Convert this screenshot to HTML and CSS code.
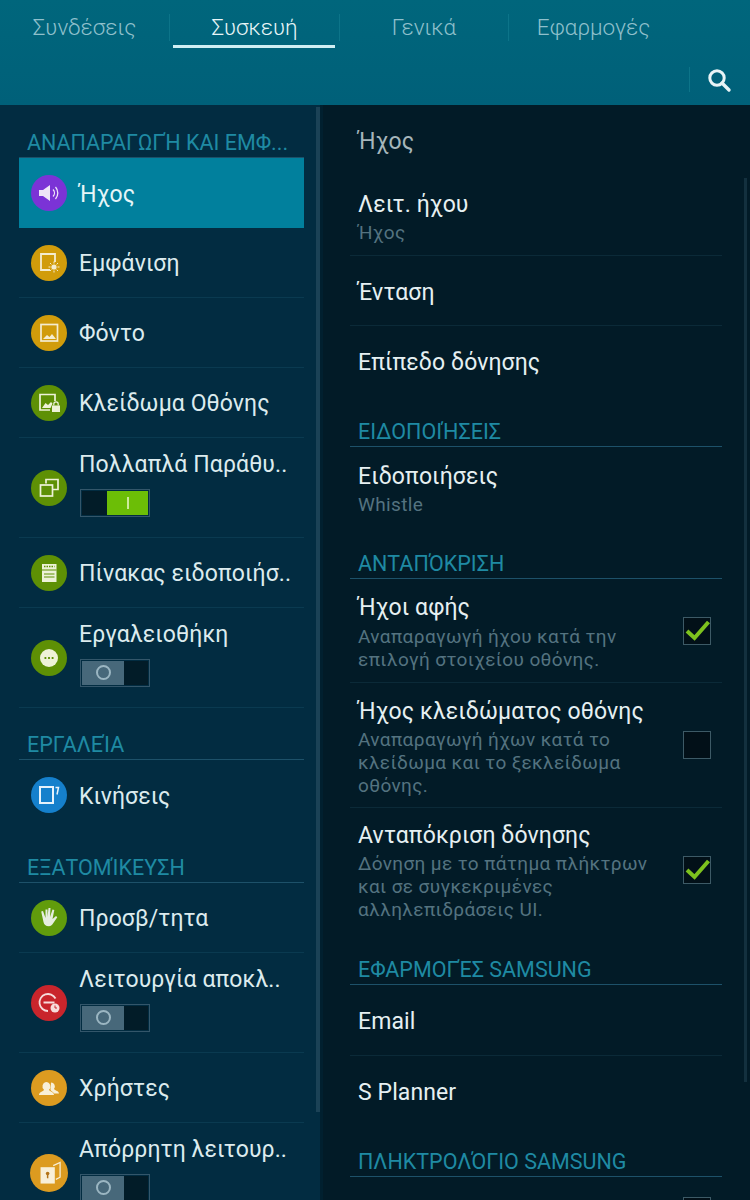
FILE: index.html
```html
<!DOCTYPE html>
<html lang="el">

<head>
    <meta charset="UTF-8">
    <meta name="viewport" content="width=device-width, initial-scale=1.0">
    <title>Ρυθμίσεις</title>
    <link rel="stylesheet" href="styles.css">
</head>

<body>
    <header class="topbar">
        <nav class="tabs">
            <div class="tab">Συνδέσεις</div>
            <div class="tab active">Συσκευή</div>
            <div class="tab">Γενικά</div>
            <div class="tab">Εφαρμογές</div>
        </nav>
        <div class="search-row">
            <div class="search-btn">
                <svg width="26" height="26" viewBox="0 0 26 26">
                    <circle cx="11" cy="11" r="7.2" fill="none" stroke="#e8f4f6" stroke-width="3" />
                    <path d="M16 16l7 7" stroke="#e8f4f6" stroke-width="3.4" stroke-linecap="round" />
                </svg>
            </div>
        </div>
    </header>

    <div class="main-content">
        <aside class="left-section">
            <div class="group-title first">ΑΝΑΠΑΡΑΓΩΓΉ ΚΑΙ ΕΜΦ...</div>
            <div class="menu-item selected">
                <span class="icon purple">
                    <svg viewBox="0 0 36 36">
                        <path d="M8 15h4l7-5v16l-7-5H8z" fill="#efe6f7" />
                        <path d="M22 14.5a5 5 0 0 1 0 7M24.500 12a9 9 0 0 1 0 12" fill="none" stroke="#efe6f7" stroke-width="1.300" />
                    </svg>
                </span>
                <span class="label">Ήχος</span>
            </div>
            <div class="menu-item">
                <span class="icon amber">
                    <svg viewBox="0 0 36 36">
                        <path d="M19 25H10V9h14v8" fill="none" stroke="#f4ecd0" stroke-width="1.800" />
                        <circle cx="23" cy="22" r="2.600" fill="#f4ecd0" />
                        <path d="M23 16.500v2M23 25.500v2M17.500 22h2M26.500 22h2M19 18l1.400 1.400M25.600 24.600l1.400 1.400M27 18l-1.400 1.400M20.400 24.600L19 26" stroke="#f4ecd0" stroke-width="1" />
                    </svg>
                </span>
                <span class="label">Εμφάνιση</span>
            </div>
            <div class="menu-item">
                <span class="icon amber">
                    <svg viewBox="0 0 36 36">
                        <rect x="10" y="9.500" width="16.500" height="16.500" fill="none" stroke="#f4ecd0" stroke-width="1.700" />
                        <path d="M12 24l4-4 2.500 2 2.500-3 4 5z" fill="#f4ecd0" />
                    </svg>
                </span>
                <span class="label">Φόντο</span>
            </div>
            <div class="menu-item">
                <span class="icon green">
                    <svg viewBox="0 0 36 36">
                        <path d="M19 25H9V9.500h15V16" fill="none" stroke="#eef2d8" stroke-width="1.700" />
                        <path d="M11 23l3.500-5 2.500 2 3-3 1.500 1.500-2 4.500z" fill="#eef2d8" />
                        <rect x="21" y="20.500" width="8" height="6.500" fill="#eef2d8" />
                        <path d="M22.800 20.500v-1.500a2.200 2.200 0 0 1 4.400 0v1.500" fill="none" stroke="#eef2d8" stroke-width="1.200" />
                    </svg>
                </span>
                <span class="label">Κλείδωμα Οθόνης</span>
            </div>
            <div class="menu-item tall">
                <span class="icon green">
                    <svg viewBox="0 0 36 36">
                        <path d="M15 13.500V9.500h12v10h-6" fill="none" stroke="#eef2d8" stroke-width="1.700" />
                        <rect x="9.500" y="15" width="12" height="11" fill="none" stroke="#eef2d8" stroke-width="1.700" />
                    </svg>
                </span>
                <div class="label-stack">
                    <span class="label">Πολλαπλά Παράθυ..</span>
                    <div class="toggle on"><span class="toggle-off"></span><span class="toggle-on"><i></i></span></div>
                </div>
            </div>
            <div class="menu-item">
                <span class="icon green">
                    <svg viewBox="0 0 36 36">
                        <rect x="11" y="9" width="14.500" height="18" fill="#eef2d8" />
                        <path d="M13 11.500h10.500" stroke="#5e9005" stroke-width="1.400" stroke-dasharray="1.500 1" />
                        <path d="M11 15h14.500M13 19h10.500M13 22h10.500" stroke="#5e9005" stroke-width="1.200" />
                    </svg>
                </span>
                <span class="label">Πίνακας ειδοποιήσ..</span>
            </div>
            <div class="menu-item tall">
                <span class="icon green">
                    <svg viewBox="0 0 36 36">
                        <circle cx="18" cy="18" r="9" fill="#eef2d8" />
                        <path d="M13.500 18h9" stroke="#5e9005" stroke-width="1.800" stroke-dasharray="1.800 1.800" />
                    </svg>
                </span>
                <div class="label-stack">
                    <span class="label">Εργαλειοθήκη</span>
                    <div class="toggle off"><span class="toggle-on"><b></b></span><span class="toggle-off"></span></div>
                </div>
            </div>

            <div class="group-title">ΕΡΓΑΛΕΊΑ</div>
            <div class="menu-item plain">
                <span class="icon blue">
                    <svg viewBox="0 0 36 36">
                        <rect x="9" y="10" width="13" height="16" fill="none" stroke="#e6f2fb" stroke-width="2" />
                        <path d="M24.500 10.500h3l-1.500 7" fill="none" stroke="#e6f2fb" stroke-width="1.500" />
                    </svg>
                </span>
                <span class="label">Κινήσεις</span>
            </div>

            <div class="group-title gap53">ΕΞΑΤΟΜΊΚΕΥΣΗ</div>
            <div class="menu-item">
                <span class="icon lime">
                    <svg viewBox="0 0 36 36">
                        <path d="M12 11l2.500 7V9.500h2V17l1-9h2l-.5 9 2.500-7.500 1.800.6L21.500 19l3.500-3 1.300 1.200-5 7.300a4 4 0 0 1-3.300 1.700c-3.500 0-5-1.700-5.500-4.200L10.200 11.500z" fill="#e6eee0" />
                    </svg>
                </span>
                <span class="label">Προσβ/τητα</span>
            </div>
            <div class="menu-item tall">
                <span class="icon red">
                    <svg viewBox="0 0 36 36">
                        <path d="M24.500 13.500A8.500 8.500 0 1 0 17 26" fill="none" stroke="#f7dcdc" stroke-width="1.800" />
                        <path d="M12.500 17.500h11" stroke="#f7dcdc" stroke-width="2" />
                        <circle cx="24" cy="23" r="4.500" fill="#f7dcdc" />
                        <path d="M24 20.500V23h2" fill="none" stroke="#c9252c" stroke-width="1" />
                    </svg>
                </span>
                <div class="label-stack">
                    <span class="label">Λειτουργία αποκλ..</span>
                    <div class="toggle off"><span class="toggle-on"><b></b></span><span class="toggle-off"></span></div>
                </div>
            </div>
            <div class="menu-item">
                <span class="icon orange">
                    <svg viewBox="0 0 36 36">
                        <path d="M20 12.500a4 4 0 0 1 3 6.500c1 1.500 5 2 5 4.500h-5c-1-2-3-2.500-3.500-3.500" fill="#f8efd8" />
                        <path d="M15 12a4.500 4.500 0 0 1 3 7.800c0 1.700 5 2 5 5.200H8c0-3.200 5-3.500 5-5.200A4.500 4.500 0 0 1 15 12z" fill="#f8efd8" />
                    </svg>
                </span>
                <span class="label">Χρήστες</span>
            </div>
            <div class="menu-item tall">
                <span class="icon orange big">
                    <svg viewBox="0 0 36 36">
                        <path d="M22 11l6.500-3v14l-4 2" fill="none" stroke="#f8efd8" stroke-width="1.200" />
                        <rect x="10" y="12.500" width="13.500" height="15.500" fill="#f8efd8" />
                        <circle cx="16.700" cy="18.500" r="1.700" fill="#b3741a" />
                        <path d="M16 19h1.400v4H16z" fill="#b3741a" />
                    </svg>
                </span>
                <div class="label-stack">
                    <span class="label">Απόρρητη λειτουρ..</span>
                    <div class="toggle off"><span class="toggle-on"><b></b></span><span class="toggle-off"></span></div>
                </div>
            </div>
            <div class="scrollbar"></div>
        </aside>

        <section class="right-section">
            <div class="row first-row"><span class="row-title dim">Ήχος</span></div>
            <div class="row two-line lined">
                <span class="row-title">Λειτ. ήχου</span>
                <span class="row-sub">Ήχος</span>
            </div>
            <div class="row lined"><span class="row-title">Ένταση</span></div>
            <div class="row"><span class="row-title">Επίπεδο δόνησης</span></div>

            <div class="group-title right">ΕΙΔΟΠΟΙΉΣΕΙΣ</div>
            <div class="row two-line notify">
                <span class="row-title">Ειδοποιήσεις</span>
                <span class="row-sub">Whistle</span>
            </div>

            <div class="group-title right short">ΑΝΤΑΠΌΚΡΙΣΗ</div>
            <div class="check-row lined h104">
                <div class="check-text">
                    <span class="row-title">Ήχοι αφής</span>
                    <span class="row-sub">Αναπαραγωγή ήχου κατά την επιλογή στοιχείου οθόνης.</span>
                </div>
                <span class="checkbox checked">
                    <svg viewBox="0 0 26 26"><path d="M3 13l7.500 7L24.500 4" fill="none" stroke="#7dc21e" stroke-width="4" /></svg>
                </span>
            </div>
            <div class="check-row lined h125">
                <div class="check-text">
                    <span class="row-title">Ήχος κλειδώματος οθόνης</span>
                    <span class="row-sub">Αναπαραγωγή ήχων κατά το κλείδωμα και το ξεκλείδωμα οθόνης.</span>
                </div>
                <span class="checkbox"></span>
            </div>
            <div class="check-row h123">
                <div class="check-text">
                    <span class="row-title">Ανταπόκριση δόνησης</span>
                    <span class="row-sub">Δόνηση με το πάτημα πλήκτρων και σε συγκεκριμένες αλληλεπιδράσεις UI.</span>
                </div>
                <span class="checkbox checked">
                    <svg viewBox="0 0 26 26"><path d="M3 13l7.500 7L24.500 4" fill="none" stroke="#7dc21e" stroke-width="4" /></svg>
                </span>
            </div>

            <div class="group-title right tall-title">ΕΦΑΡΜΟΓΈΣ SAMSUNG</div>
            <div class="row lined email-row"><span class="row-title">Email</span></div>
            <div class="row"><span class="row-title">S Planner</span></div>

            <div class="group-title right">ΠΛΗΚΤΡΟΛΌΓΙΟ SAMSUNG</div>
            <div class="check-row last-row"><span class="checkbox"></span></div>
            <div class="scrollbar right-bar"></div>
        </section>
    </div>
</body>

</html>
```

FILE: styles.css
```css
html,
body {
    margin: 0;
    padding: 0;
    height: 1200px;
    overflow: hidden;
}

body {
    width: 750px;
    font-family: Roboto, "Noto Sans", sans-serif;
    background-color: #021b27;
    color: #e6f0f2;
}

/* top bar */
.topbar {
    height: 105px;
    background: linear-gradient(#00667c, #006079);
}

.tabs {
    display: grid;
    grid-template-columns: 170px 170px 169px 169px;
    padding-top: 14px;
}

.tab {
    height: 27px;
    text-align: center;
    font-size: 22.500px;
    line-height: 27px;
    font-weight: 300;
    color: #8fc0cc;
    border-right: 1px solid #0c7489;
    position: relative;
}

.tab:last-child {
    border-right: none;
}

.tab.active {
    color: #e8f5f7;
}

.tab.active::after {
    content: "";
    position: absolute;
    left: 3px;
    right: 4px;
    bottom: -7px;
    height: 3px;
    background-color: #cfeef3;
}

.search-row {
    display: flex;
    justify-content: flex-end;
    padding-top: 26px;
}

.search-btn {
    width: 61px;
    height: 25px;
    border-left: 1px solid #0c7489;
    padding-left: 16px;
    box-sizing: border-box;
}

/* columns */
.main-content {
    display: flex;
    height: 1095px;
}

.left-section {
    width: 323px;
    height: 1095px;
    box-sizing: border-box;
    padding: 0 16px 0 19px;
    background-color: #022c41;
    border-right: 3px solid #01202f;
    flex-shrink: 0;
    position: relative;
    overflow: hidden;
}

.right-section {
    flex: 1;
    padding: 1px 28px 0 27px;
    position: relative;
    overflow: hidden;
}

.scrollbar {
    position: absolute;
    left: 316px;
    top: 2px;
    width: 4px;
    height: 1005px;
    background-color: #1b4256;
}

.right-bar {
    left: 421px;
    top: 73px;
    width: 3px;
    height: 904px;
    background-color: #13303e;
}

/* section titles */
.group-title {
    height: 52px;
    box-sizing: border-box;
    display: flex;
    align-items: flex-end;
    padding: 0 0 0 8px;
    border-bottom: 1px solid #1d5169;
    font-size: 21.500px;
    line-height: 28px;
    color: #1f8aa3;
}

.group-title.first {
    height: 53px;
}

.group-title.gap53 {
    height: 53px;
}

.group-title.right {
    height: 51px;
}

.group-title.short {
    height: 49px;
}

.group-title.tall-title {
    height: 54px;
}

/* left menu */
.menu-item {
    height: 70px;
    box-sizing: border-box;
    display: flex;
    align-items: center;
    gap: 12px;
    padding-left: 12px;
    border-bottom: 1px solid #0a3a50;
}

.menu-item.tall {
    height: 100px;
}

.menu-item.plain {
    border-bottom: none;
}

.menu-item.selected {
    background-color: #01809d;
    border-bottom: none;
}

.icon {
    width: 36px;
    height: 36px;
    border-radius: 50%;
    flex-shrink: 0;
    display: block;
}

.icon svg {
    display: block;
    width: 100%;
    height: 100%;
}

.icon.big {
    width: 38px;
    height: 38px;
    margin: 0 -1px;
}

.purple {
    background-color: #7b33d6;
}

.amber {
    background-color: #d19c0b;
}

.green {
    background-color: #5e9005;
}

.lime {
    background-color: #619c0c;
}

.blue {
    background-color: #1580cc;
}

.red {
    background-color: #c9252c;
}

.orange {
    background-color: #dc9b20;
}

.label {
    font-size: 23px;
    line-height: 28px;
    letter-spacing: 0.1px;
    padding-top: 3px;
    color: #dcebee;
    white-space: nowrap;
}

.selected .label {
    color: #e6f6f8;
}

.label-stack {
    display: flex;
    flex-direction: column;
    gap: 10px;
    margin-top: -9px;
}

.label-stack .label {
    padding-top: 1px;
}

.toggle {
    width: 70px;
    height: 28px;
    margin-left: 1px;
    box-sizing: border-box;
    border: 1px solid #33566a;
    display: flex;
    padding: 1px;
}

.toggle-off {
    background-color: #021c28;
    display: block;
}

.toggle-on {
    display: flex;
    align-items: center;
    justify-content: center;
}

.toggle.on .toggle-off {
    width: 25px;
}

.toggle.on .toggle-on {
    flex: 1;
    background-color: #6cbe06;
}

.toggle.on i {
    display: block;
    width: 2px;
    height: 12px;
    background-color: #cdeb9b;
}

.toggle.off .toggle-on {
    width: 42px;
    background-color: #47687a;
}

.toggle.off .toggle-off {
    flex: 1;
}

.toggle.off b {
    display: block;
    width: 15px;
    height: 15px;
    box-sizing: border-box;
    border: 2.500px solid #9bb6c2;
    border-radius: 50%;
}

/* right list */
.row {
    height: 70px;
    box-sizing: border-box;
    display: flex;
    flex-direction: column;
    justify-content: center;
    padding-left: 8px;
    padding-top: 4px;
}

.row.first-row {
    height: 70px;
    padding-top: 2px;
}

.row.two-line {
    height: 80px;
    justify-content: flex-start;
    padding-top: 15px;
}

.row.notify {
    height: 83px;
    padding-top: 16px;
}

.row.email-row {
    height: 71px;
}

.lined {
    border-bottom: 1px solid #0b2a38;
}

.row-title {
    font-size: 23px;
    line-height: 28px;
    letter-spacing: 0.1px;
    color: #e6f0f2;
}

.row-title.dim {
    color: #a6b6bb;
}

.row-sub {
    font-size: 19px;
    line-height: 23px;
    letter-spacing: 0.38px;
    color: #547380;
    padding-top: 2px;
}

.check-row {
    box-sizing: border-box;
    display: flex;
    align-items: center;
    justify-content: space-between;
    padding: 0 11px 0 8px;
}

.h104 {
    height: 104px;
}

.h125 {
    height: 125px;
}

.h123 {
    height: 123px;
}

.check-text {
    width: 300px;
    display: flex;
    flex-direction: column;
    padding-top: 4px;
}

.check-text .row-sub {
    padding-top: 2px;
}

.h104 .row-sub {
    padding-top: 3px;
}

.checkbox {
    width: 28px;
    height: 28px;
    box-sizing: border-box;
    border: 1px solid #3d5a66;
    background-color: #021018;
    flex-shrink: 0;
    display: block;
}

.checkbox svg {
    display: block;
    width: 26px;
    height: 26px;
}

.last-row {
    height: 60px;
    align-items: flex-start;
    justify-content: flex-end;
    padding-top: 20px;
}
```
